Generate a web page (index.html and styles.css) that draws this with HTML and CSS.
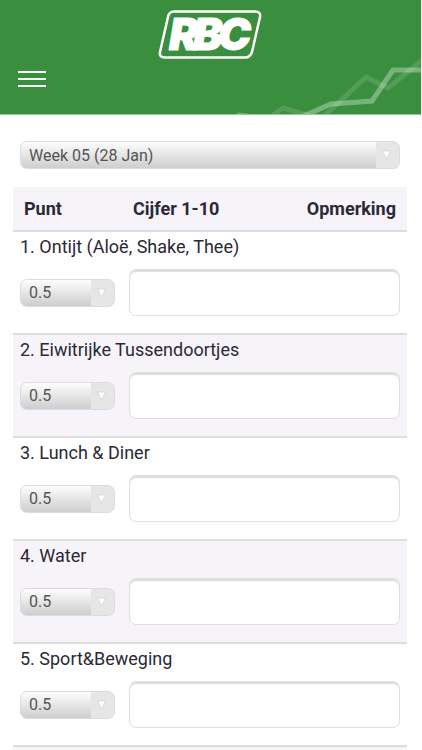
FILE: index.html
```html
<!DOCTYPE html>
<html lang="nl">
<head>
  <meta charset="UTF-8" />
  <meta name="viewport" content="width=device-width, initial-scale=1.0" />
  <title>RBC</title>
  <link rel="stylesheet" href="styles.css">
</head>
<body>
  <header class="header">
    <svg class="chart" viewBox="0 0 190 62" aria-hidden="true">
      <g fill="none" stroke="#fff" stroke-width="5">
        <path stroke-opacity=".13" d="M38 66 L52 56 L90 67 L135 25 L157 36 L194 6" />
        <path stroke-opacity=".32" d="M68 66 L100 52 L141 49 L162 18 L194 18" />
        <path stroke-opacity=".25" stroke-width="3" d="M6 62 L18 63" />
      </g>
    </svg>
    <svg class="logo" viewBox="0 0 106 50" role="img" aria-label="RBC">
      <path d="M16 1.500 H97 Q103 1.500 102 7 L94 42 Q92 47.500 87 47.500 H7 Q1 47.500 2 42 L10 7 Q11 1.500 16 1.500 Z" fill="none" stroke="#fff" stroke-width="2.500" />
      <text class="logo-text" x="11 35 60" y="40">RBC</text>
    </svg>
    <button type="button" class="menu-btn" aria-label="Menu">
      <span></span>
      <span></span>
      <span></span>
    </button>
  </header>

  <main class="content">
    <form>
      <div class="week">
        <select class="select" name="week" aria-label="Week">
          <option>Week 05 (28 Jan)</option>
        </select>
      </div>

      <table class="scores">
        <thead>
          <tr>
            <th class="col-punt">Punt</th>
            <th class="col-cijfer">Cijfer 1-10</th>
            <th class="col-opmerking">Opmerking</th>
          </tr>
        </thead>
        <tbody>
          <tr>
            <td colspan="3">
              <label for="cijfer1">1. Ontijt (Aloë, Shake, Thee)</label>
              <div class="fields">
                <select class="select" id="cijfer1"><option>0.5</option></select>
                <textarea aria-label="Opmerking 1"></textarea>
              </div>
            </td>
          </tr>
          <tr>
            <td colspan="3">
              <label for="cijfer2">2. Eiwitrijke Tussendoortjes</label>
              <div class="fields">
                <select class="select" id="cijfer2"><option>0.5</option></select>
                <textarea aria-label="Opmerking 2"></textarea>
              </div>
            </td>
          </tr>
          <tr>
            <td colspan="3">
              <label for="cijfer3">3. Lunch &amp; Diner</label>
              <div class="fields">
                <select class="select" id="cijfer3"><option>0.5</option></select>
                <textarea aria-label="Opmerking 3"></textarea>
              </div>
            </td>
          </tr>
          <tr>
            <td colspan="3">
              <label for="cijfer4">4. Water</label>
              <div class="fields">
                <select class="select" id="cijfer4"><option>0.5</option></select>
                <textarea aria-label="Opmerking 4"></textarea>
              </div>
            </td>
          </tr>
          <tr>
            <td colspan="3">
              <label for="cijfer5">5. Sport&amp;Beweging</label>
              <div class="fields">
                <select class="select" id="cijfer5"><option>0.5</option></select>
                <textarea aria-label="Opmerking 5"></textarea>
              </div>
            </td>
          </tr>
        </tbody>
        <tfoot>
          <tr><td colspan="3"></td></tr>
        </tfoot>
      </table>
    </form>
  </main>
</body>
</html>
```
FILE: styles.css
```css
* {
  box-sizing: border-box;
}
body {
  margin: 0 1px 0 0;
  background: #fff;
  color: #2b2936;
  font-family: Roboto, sans-serif;
  font-size: 18px;
}
.header {
  position: relative;
  display: flex;
  flex-direction: column;
  align-items: center;
  padding: 10px 18px 27px;
  background: #3a8f3e;
  border-bottom: 1px solid #9cc79e;
}
.chart {
  position: absolute;
  right: 0;
  bottom: 0;
  width: 190px;
  height: 62px;
}
.logo {
  width: 106px;
  height: 50px;
  overflow: visible;
}
.logo-text {
  fill: #fff;
  stroke: #fff;
  stroke-width: 1px;
  font-family: Inter, sans-serif;
  font-size: 44px;
  font-style: italic;
  font-weight: 900;
}
.menu-btn {
  align-self: flex-start;
  display: flex;
  flex-direction: column;
  gap: 5px;
  width: 28px;
  margin-top: 11px;
  padding: 0;
  border: none;
  background: none;
  cursor: pointer;
}
.menu-btn span {
  height: 2px;
  background: #fff;
}
.content {
  padding: 26px 14px 0 13px;
}
.week {
  padding: 0 7px;
  margin-bottom: 18px;
}
.select {
  appearance: none;
  display: block;
  width: 100%;
  height: 28px;
  padding: 0 30px 0 8px;
  border: 1px solid #dcdcdc;
  border-radius: 7px;
  background:
    url("data:image/svg+xml,%3Csvg xmlns='http://www.w3.org/2000/svg' width='23' height='26'%3E%3Cpath d='M0 0H23V26H0Z' fill='%23e6e6e6'/%3E%3Cpath d='M6.500 9H14.500L10.500 17Z' fill='%23fff' stroke='%23cfcfcf' stroke-width='.7'/%3E%3C/svg%3E") right center no-repeat,
    linear-gradient(#fdfdfd, #cecece);
  color: #555;
  font-family: inherit;
  font-size: 16px;
}
.scores {
  width: 100%;
  table-layout: fixed;
  border-collapse: collapse;
}
.scores th {
  height: 44px;
  padding: 0 11px;
  background: #f6f4f9;
  font-weight: 700;
  text-align: left;
}
.scores .col-punt {
  width: 109px;
}
.scores .col-opmerking {
  text-align: right;
}
.scores td {
  padding: 4px 7px 17px;
  border-top: 2px solid #dedede;
}
.scores tbody tr:nth-child(even),
.scores tfoot {
  background: #f6f4f9;
}
.scores tfoot td {
  padding: 2px 0 0;
}
label {
  display: block;
  line-height: 22px;
}
.fields {
  display: grid;
  grid-template-columns: 95px 1fr;
  align-items: center;
  gap: 14px;
  margin-top: 11px;
}
textarea {
  display: block;
  width: 100%;
  height: 47px;
  padding: 8px;
  border: 1px solid #dfdfdf;
  border-radius: 7px;
  background: #fff;
  box-shadow: inset 0 2px 1px #dcdcdc;
  font-family: inherit;
  font-size: 16px;
  resize: none;
}
```
